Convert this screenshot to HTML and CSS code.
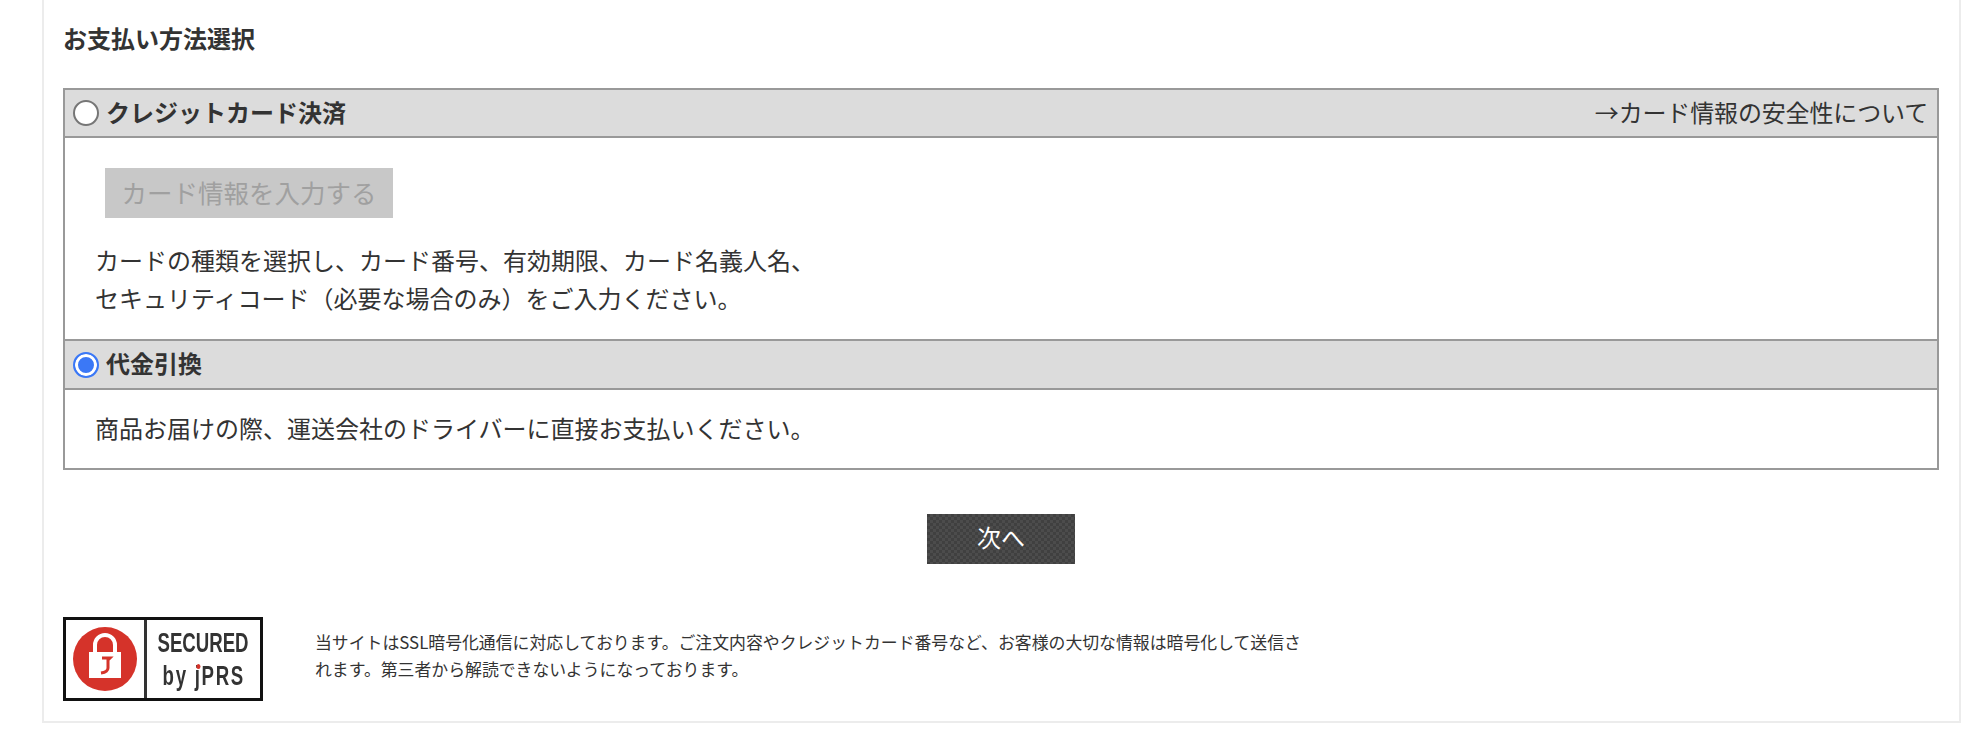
FILE: index.html
```html
<!DOCTYPE html>
<html lang="ja">
<head>
  <meta charset="UTF-8" />
  <title>お支払い方法選択</title>
  <link rel="stylesheet" href="styles.css">
</head>
<body>
  <div class="panel">
    <h2 class="title">お支払い方法選択</h2>

    <div class="pay-box">
      <div class="pay-head">
        <label class="pay-label"><input type="radio" name="pay" value="card"> <span>クレジットカード決済</span></label>
        <a class="pay-link" href="#">→カード情報の安全性について</a>
      </div>
      <div class="pay-body pay-body-card">
        <button class="card-btn" disabled>カード情報を入力する</button>
        <p>カードの種類を選択し、カード番号、有効期限、カード名義人名、<br>セキュリティコード（必要な場合のみ）をご入力ください。</p>
      </div>
      <div class="pay-head pay-head-next">
        <label class="pay-label"><input type="radio" name="pay" value="cod" checked> <span>代金引換</span></label>
      </div>
      <div class="pay-body pay-body-cod">
        <p>商品お届けの際、運送会社のドライバーに直接お支払いください。</p>
      </div>
    </div>

    <div class="next-wrap">
      <button class="next-btn">次へ</button>
    </div>

    <div class="ssl">
      <div class="seal">
        <div class="seal-icon">
          <svg width="64" height="64" viewBox="0 0 64 64">
            <circle cx="32" cy="32" r="32" fill="#d5332a"/>
            <path d="M22 27V18a10 10 0 0 1 20 0v9" fill="none" stroke="#fff" stroke-width="4"/>
            <rect x="16" y="25" width="32" height="26" fill="#fff"/>
            <path d="M29 31h8l-2 2v8q0 4-7 5" fill="none" stroke="#d5332a" stroke-width="3"/>
          </svg>
        </div>
        <div class="seal-text">
          <span class="seal-line">SECURED</span>
          <span class="seal-line seal-line-by">by <span class="seal-j">j</span>PRS</span>
        </div>
      </div>
      <p class="ssl-text">当サイトはSSL暗号化通信に対応しております。ご注文内容やクレジットカード番号など、お客様の大切な情報は暗号化して送信されます。第三者から解読できないようになっております。</p>
    </div>
  </div>
</body>
</html>
```

FILE: styles.css
```css
body {
  margin: 0;
  background-color: #fff;
  font-family: "Noto Sans CJK JP", "Noto Sans", sans-serif;
  color: #333;
  height: 748px;
  overflow: hidden;
}
.panel {
  width: 1919px;
  height: 723px;
  box-sizing: border-box;
  margin-left: 42px;
  padding: 0 20px 0 19px;
  border: 2px solid #ececec;
  border-top: none;
  background: #fff;
}
.title {
  margin: 0;
  padding-top: 21px;
  height: 88px;
  box-sizing: border-box;
  font-size: 24px;
  line-height: 34px;
  font-weight: bold;
}
.pay-box {
  border: 2px solid #999;
  height: 382px;
  box-sizing: border-box;
}
.pay-head {
  display: flex;
  align-items: center;
  justify-content: space-between;
  height: 46px;
  padding: 0 9px 0 8px;
  background: #dcdcdc;
  border-bottom: 2px solid #999;
  font-size: 24px;
}
.pay-head-next {
  border-top: 2px solid #999;
  height: 47px;
}
.pay-head-next .pay-label span {
  margin-bottom: 5px;
}
.pay-label {
  display: flex;
  align-items: center;
  gap: 7px;
  font-weight: bold;
}
.pay-label span {
  margin-bottom: 3px;
}
.pay-label input {
  appearance: none;
  box-sizing: border-box;
  margin: 0;
  width: 26px;
  height: 26px;
  border: 2px solid #767676;
  border-radius: 50%;
  background: #fff;
}
.pay-label input:checked {
  border-color: #3b78f6;
  background: #3b78f6;
  box-shadow: inset 0 0 0 3px #fff;
}
.pay-link {
  color: #333;
  text-decoration: none;
  margin-bottom: 3px;
  letter-spacing: -0.15px;
}
.pay-body {
  padding: 0 30px;
  font-size: 24px;
  line-height: 38px;
}
.pay-body p {
  margin: 0;
}
.pay-body-card {
  height: 201px;
  box-sizing: border-box;
  padding-top: 30px;
}
.pay-body-card p {
  margin-top: 23px;
}
.pay-body-cod {
  padding-top: 19px;
}
.card-btn {
  display: block;
  margin-left: 10px;
  width: 288px;
  height: 50px;
  padding: 0 0 4px;
  border: none;
  background: #c8c8c8;
  color: #a0a0a0;
  font-family: inherit;
  font-size: 25.5px;
}
.next-wrap {
  display: flex;
  justify-content: center;
  padding-top: 44px;
}
.next-btn {
  width: 148px;
  height: 50px;
  padding: 0 0 5px;
  border: none;
  background-color: #444;
  background-image: repeating-conic-gradient(#4c4c4c 0 25%, #404040 0 50%);
  background-size: 6px 6px;
  color: #fff;
  font-family: inherit;
  font-size: 24px;
}
.ssl {
  display: flex;
  align-items: flex-start;
  gap: 52px;
  margin-top: 53px;
}
.seal {
  display: flex;
  width: 200px;
  height: 84px;
  box-sizing: border-box;
  border: 3px solid #111;
  flex-shrink: 0;
  filter: blur(0.4px);
}
.seal-icon {
  display: flex;
  align-items: center;
  justify-content: center;
  box-sizing: border-box;
  width: 81px;
  flex-shrink: 0;
  border-right: 3px solid #333;
}
.seal-text {
  flex: 1;
  min-width: 0;
  display: flex;
  flex-direction: column;
  align-items: center;
  justify-content: center;
  gap: 3px;
  font-family: "Liberation Sans", sans-serif;
  font-size: 27px;
  line-height: 30px;
  font-weight: bold;
  color: #333;
}
.seal-line {
  display: block;
  white-space: nowrap;
  transform: scaleX(0.69);
}
.seal-line-by {
  letter-spacing: 2.5px;
}
.seal-j {
  position: relative;
}
.seal-j::before {
  content: "";
  position: absolute;
  left: 2px;
  top: 3px;
  width: 6px;
  height: 5px;
  border-radius: 50%;
  background: #d5332a;
}
.ssl-text {
  margin: 0;
  padding-top: 11px;
  width: 990px;
  font-size: 16.87px;
  line-height: 27px;
}
```
